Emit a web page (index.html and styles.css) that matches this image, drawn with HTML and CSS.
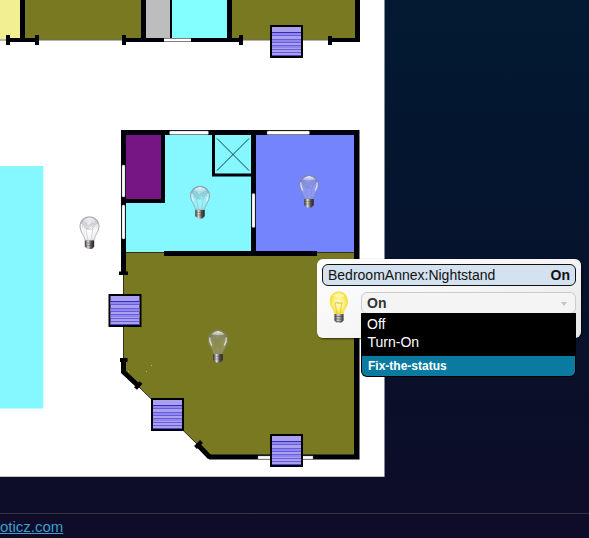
FILE: index.html
```html
<!DOCTYPE html>
<html lang="en">
<head>
<meta charset="utf-8">
<title>Floorplan</title>
<link rel="stylesheet" href="styles.css">
</head>
<body>
<main class="stage">
<svg class="plan" width="385" height="477" viewBox="0 0 385 477">
  <defs>
    <linearGradient id="cap" x1="0" x2="1"><stop offset="0" stop-color="#333"/><stop offset=".35" stop-color="#ddd"/><stop offset=".65" stop-color="#5d5753"/><stop offset="1" stop-color="#28211e"/></linearGradient>
    <radialGradient id="glass" cx=".5" cy=".6" r=".55"><stop offset="0" stop-color="#fff" stop-opacity=".15"/><stop offset=".65" stop-color="#ccd" stop-opacity=".3"/><stop offset="1" stop-color="#778" stop-opacity=".5"/></radialGradient>
    <linearGradient id="shine" x1="0" y1="0" x2="0" y2="1"><stop offset="0" stop-color="#fff" stop-opacity=".95"/><stop offset="1" stop-color="#eef" stop-opacity=".35"/></linearGradient>
    <g id="bulb">
      <path d="M10.500 .8C4.500 .8.900 5.200.900 10.500c0 5.500 4.500 8.500 5.300 14h8.600c.8-5.500 5.300-8.500 5.300-14C20.100 5.200 16.500.8 10.500.8z" fill="url(#glass)" stroke="#88888e" stroke-opacity=".7" stroke-width=".8"/>
      <path d="M3.500 5Q10.500-2 17.500 5Q10.500 6.500 3.500 5z" fill="url(#shine)"/>
      <path d="M2.300 8q-.5 4 2 8M18.700 8q.5 4-2 8" fill="none" stroke="#fff" stroke-opacity=".7" stroke-width="1.300"/>
      <path d="M4 8l4-2 1 3 4-3 4 2-2 4-4-1-3 3-3-2z" fill="#778" opacity=".25"/>
      <path d="M9 24l-2-10 2-2 1 2 1-2 1 2 2-2-2 12" fill="none" stroke="#777" stroke-opacity=".35" stroke-width=".7"/>
      <path d="M5.800 24.500h9.400v6.200l-2.300 2.300H8.600l-2.800-2.300z" fill="url(#cap)"/>
      <path d="M6 27h9M6 29.500h9" stroke="#292522" stroke-opacity=".4" stroke-width=".6"/>
    </g>
    <g id="blind">
      <path d="M1 1h31v31H1z" fill="#aaa0ee" stroke="#000" stroke-width="2"/>
      <path d="M2 8h29v2H2zM2 15h29v2H2zM2 21h29v2H2z" fill="#8f87eb"/>
      <path d="M2 7.500h29" stroke="#332bba"/>
      <path d="M2 10.500h29M2 14.500h29M2 17.500h29M2 20.500h29M2 24.500h29M2 27.500h29" stroke="#655ddb"/>
      <path d="M2 30.500h29" stroke="#4a42dc"/>
    </g>
  </defs>
  <path d="M0 0h384.500v476.700H0z" fill="#fff"/>
  <g>
    <path d="M0 0h20v39H0z" fill="#f2ee92"/>
    <path d="M25 0h116v40H25zM232 0h123v40H232z" fill="#797922"/>
    <path d="M146 0h24v38h-24z" fill="#bdbdbd"/>
    <path d="M172 0h55v38h-55z" fill="#84ffff"/>
    <path d="M0 40h8M38 40h87M241 40h91" stroke="#6c6c58"/>
    <path d="M20 0h5v38h13v4H7v-4h13zM141 0h5v38h81V0h5v38h9v4H123v-4h18zM355 0h5v42h-30v-4h25z" fill="#00000a"/>
    <path d="M170 0h2v38h-2zM6 35h4v10H6zM35 35h4v10h-4zM122 35h4v10h-4zM239 35h4v10h-4zM328 36h4v9h-4z" fill="#00000a"/>
    <path d="M164 38.500h27v3h-27z" fill="#fff"/>
  </g>
  <path d="M0 166h43.300v242.500H0z" fill="#84f7ff"/>
  <g>
    <path d="M125 134h128v119H125z" fill="#84f7ff"/>
    <path d="M255 134h100v119H255z" fill="#7384fc"/>
    <path d="M124 253h231v204H210L124 372z" fill="#797922"/>
    <path d="M126 134h35v65h-35z" fill="#761684"/>
    <path d="M124 252.500h41M317 252.500h38M123.500 274v85M138 386l62 61" fill="none" stroke="#30301f"/>
    <path d="M121 130h238.500v329.500H209v-5h145V135H126v137h-5z" fill="#00000a"/>
    <path d="M161 134h4v69h-39v-4h35zM251 134h5v117h61v5H164v-5h87z" fill="#00000a"/>
    <path d="M213.500 134v41H251" fill="none" stroke="#00000a" stroke-width="3"/>
    <path d="M217 138.500l32 32M249 138.500l-32 32" stroke="#164047"/>
    <path d="M119 271.500h9v3.500h-9zM120 358h7.500v4H120z" fill="#000"/>
    <path d="M123.500 360v12l15 14M198 445l12 12.500" fill="none" stroke="#000" stroke-width="5"/>
    <path d="M135.500 388.500l5.500-6M195.500 447.500l6-6" stroke="#000" stroke-width="4"/>
    <g fill="#fff" stroke="#888" stroke-width=".4"><rect x="169.500" y="131" width="39" height="3.500" rx="1"/><rect x="267" y="131" width="42.500" height="3.500" rx="1"/><rect x="122" y="165" width="3" height="32" rx="1"/><rect x="122" y="205" width="3" height="34" rx="1"/><rect x="252" y="193.500" width="3" height="34" rx="1"/><path d="M258 456h55v3h-55z"/></g>
    <path d="M151 365l1 1M146 372l1-1M128 371l1 1" stroke="#b5c34a"/>
  </g>
  <use href="#blind" x="270" y="25"/><use href="#blind" x="108.500" y="294"/><use href="#blind" x="151" y="398"/><use href="#blind" x="270" y="434"/>
  <use href="#bulb" x="79" y="216"/><use href="#bulb" x="189.500" y="185.500"/><use href="#bulb" x="298.500" y="174.500"/><use href="#bulb" x="207.500" y="329.500"/>
</svg>
<section class="device">
  <header class="device-title"><span>BedroomAnnex:Nightstand</span><b>On</b></header>
  <div class="device-body">
    <svg class="lamp" width="22" height="34" viewBox="0 0 22 34">
      <defs><radialGradient id="glow"><stop offset="0" stop-color="#fffcc5"/><stop offset=".55" stop-color="#fff18a"/><stop offset="1" stop-color="#f5df28"/></radialGradient>
      <linearGradient id="base"><stop offset="0" stop-color="#333"/><stop offset=".4" stop-color="#ddd"/><stop offset="1" stop-color="#333"/></linearGradient></defs>
      <path d="M10.800 .8C5 .8 2 5.200 2 10.500c0 5.500 4 7.500 4.700 12.500h8.400c.7-5 4.600-7 4.600-12.500C19.700 5.200 16.500.8 10.800.8z" fill="url(#glow)" stroke="#f0df58" stroke-width=".6"/>
      <path d="M9 22.500L7 12l2-1 1 2 1-2 1 2 2-2-2 11" fill="none" stroke="#bda52d" stroke-opacity=".7" stroke-width=".7"/>
      <path d="M4 5q6.500-6 13 0-6.500 2-13 0" fill="#fffce0" opacity=".6"/>
      <path d="M6.500 23h9v6.500L13 32H9l-2.500-2.500z" fill="url(#base)"/><path d="M6.500 25.500h9M6.500 28h9M7.500 30.500h7" stroke="#333" stroke-opacity=".7" stroke-width=".7"/>
    </svg>
    <div class="select">
      <div class="select-value"><span>On</span><i class="arrow"></i></div>
      <ul class="menu"><li>Off</li><li class="turn">Turn-On</li><li class="active">Fix-the-status</li></ul>
    </div>
  </div>
</section>
</main>
<footer class="footer"><a href="#">oticz.com</a></footer>
</body>
</html>
```
FILE: styles.css
```css
* { box-sizing: border-box; }
html { height: 100%; }
body {
  margin: 0;
  height: 538px;
  overflow: hidden;
  background: linear-gradient(#021a32, #06132d 45%, #0b0f29 80%, #0f0c28);
  font-family: "Liberation Sans", Arial, sans-serif;
}
.stage { position: relative; height: 513px; }
.plan { display: block; }
.device {
  position: absolute;
  left: 317px;
  top: 259px;
  width: 264px;
  height: 79px;
  padding: 5px;
  border-radius: 6px;
  background: linear-gradient(160deg, #fff, #f5f5f5 50%, #e5e5e5);
  box-shadow: 1px 1px 2px rgba(0, 0, 0, .65);
}
.device-title {
  display: flex;
  justify-content: space-between;
  align-items: center;
  height: 22px;
  padding: 0 5px;
  border: 1px solid #111;
  border-radius: 6px;
  background: #d4e1ee;
  color: #111;
  font-size: 14px;
}
.device-body { display: flex; padding-top: 6px; }
.lamp { flex: none; margin: -1px 11px 0 6px; }
.select { width: 215px; }
.select-value {
  display: flex;
  justify-content: space-between;
  align-items: center;
  height: 22px;
  padding: 0 8px 0 5px;
  border: 1px solid #ccc;
  border-radius: 6px;
  background: #f4f4f4;
  color: #333;
  font-size: 14px;
  font-weight: bold;
}
.arrow {
  margin-top: 2px;
  border: 3.5px solid transparent;
  border-top: 4px solid #c4c4c4;
  border-bottom: 0;
}
.menu {
  position: relative;
  height: 64px;
  margin: -1px 0 0;
  padding: 2px 1px 0;
  list-style: none;
  background: #000;
  color: #fff;
  font-size: 14px;
  line-height: 18px;
  border-radius: 0 0 6px 6px;
}
.menu li { padding-left: 5px; }
.menu .turn { padding-left: 5.5px; }
.menu .active {
  height: 20px;
  margin-top: 5px;
  padding-left: 6px;
  border-radius: 0 0 5px 5px;
  background: #0b7aa1;
  font-size: 12px;
  font-weight: bold;
  line-height: 20px;
}
.footer {
  height: 25px;
  border-top: 1px solid #35343f;
  font-size: 15px;
  line-height: 26px;
}
.footer a { color: #3f9ccc; }
```
